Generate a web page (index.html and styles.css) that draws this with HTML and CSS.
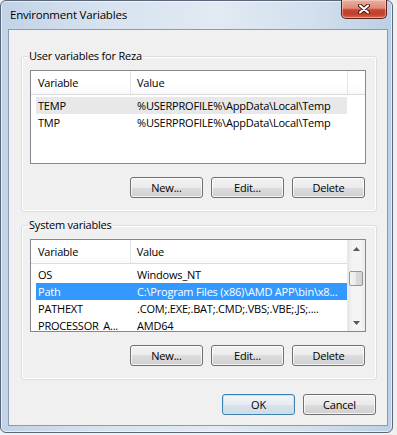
FILE: index.html
```html
<!DOCTYPE html>
<html lang="en">
<head>
    <meta charset="UTF-8">
    <meta name="viewport" content="width=device-width, initial-scale=1.0">
    <title>Environment Variables</title>
    <link rel="stylesheet" href="styles.css">
</head>
<body>

    <div class="window">
        <div class="titlebar">
            <span class="title">Environment Variables</span>
            <button class="close" title="Close">
                <svg width="12" height="10" viewBox="0 0 12 10">
                    <path d="M2 1.5 L10 8.5 M10 1.5 L2 8.5" stroke="#4a1a12" stroke-width="4" stroke-linecap="round"/>
                    <path d="M2 1.5 L10 8.5 M10 1.5 L2 8.5" stroke="#fff" stroke-width="2" stroke-linecap="round"/>
                </svg>
            </button>
        </div>

        <div class="client">
            <!-- User variables -->
            <div class="group">
                <span class="legend">User variables for Reza</span>
                <div class="list list-user">
                    <div class="list-main">
                        <div class="list-head">
                            <span class="head-name">Variable</span>
                            <span class="head-value">Value</span>
                        </div>
                        <div class="rows">
                            <div class="row muted"><span class="cell-name">TEMP</span><span class="cell-value">%USERPROFILE%\AppData\Local\Temp</span></div>
                            <div class="row"><span class="cell-name">TMP</span><span class="cell-value">%USERPROFILE%\AppData\Local\Temp</span></div>
                        </div>
                    </div>
                </div>
                <div class="actions">
                    <button class="btn">New...</button>
                    <button class="btn">Edit...</button>
                    <button class="btn">Delete</button>
                </div>
            </div>

            <!-- System variables -->
            <div class="group">
                <span class="legend">System variables</span>
                <div class="list list-sys">
                    <div class="list-main">
                        <div class="list-head">
                            <span class="head-name">Variable</span>
                            <span class="head-value">Value</span>
                        </div>
                        <div class="rows">
                            <div class="row"><span class="cell-name">OS</span><span class="cell-value">Windows_NT</span></div>
                            <div class="row selected"><span class="cell-name">Path</span><span class="cell-value">C:\Program Files (x86)\AMD APP\bin\x8...</span></div>
                            <div class="row"><span class="cell-name">PATHEXT</span><span class="cell-value">.COM;.EXE;.BAT;.CMD;.VBS;.VBE;.JS;....</span></div>
                            <div class="row"><span class="cell-name">PROCESSOR_A...</span><span class="cell-value">AMD64</span></div>
                        </div>
                    </div>
                    <div class="scroll">
                        <div class="scroll-btn"><svg width="7" height="4" viewBox="0 0 7 4"><path d="M0 4 L3.5 0 L7 4 Z" fill="#5a5a5a"/></svg></div>
                        <div class="thumb"></div>
                        <div class="track"></div>
                        <div class="scroll-btn"><svg width="7" height="4" viewBox="0 0 7 4"><path d="M0 0 L7 0 L3.5 4 Z" fill="#5a5a5a"/></svg></div>
                    </div>
                </div>
                <div class="actions">
                    <button class="btn">New...</button>
                    <button class="btn">Edit...</button>
                    <button class="btn">Delete</button>
                </div>
            </div>

            <div class="footer">
                <button class="btn default">OK</button>
                <button class="btn">Cancel</button>
            </div>
        </div>
    </div>

</body>
</html>
```

FILE: styles.css
```css
* { box-sizing: border-box; }
body { margin: 0; background: #f0f0f0; font-family: "Open Sans", "Segoe UI", sans-serif; font-size: 11px; letter-spacing: -0.2px; color: #000; }

/* window frame */
.window { width: 393px; height: 433px; border: 1px solid #59677a; border-radius: 6px; display: flex; flex-direction: column;
    background: linear-gradient(to right, #c2d3e6, #d6e2ef 25%, #e2eaf3 55%, #d2dfed 80%, #bccfe4);
    box-shadow: inset 0 0 0 1px rgba(255,255,255,.6); }
.titlebar { height: 28px; display: flex; align-items: flex-start; }
.title { flex: 1; padding-left: 9px; line-height: 27px; font-size: 11.5px; }
.close { width: 46px; height: 19px; margin: -1px 5px 0 0; padding: 0; display: flex; align-items: center; justify-content: center;
    border: 1px solid #5a2219; border-top: none; border-radius: 0 0 5px 5px;
    background: linear-gradient(#eab0a3, #de8b78 45%, #c9452f 55%, #c2412c 80%, #d66c53);
    box-shadow: inset 0 0 0 1px rgba(255,220,210,.5); }

.client { margin-left: 7px; width: 380px; height: 397px; border: 1px solid #8c9cb0; background: #f0f0f0; display: flex; flex-direction: column; }

/* group boxes */
.group { position: relative; margin: 26px 10px 0 12px; padding: 13px 10px 13px 8px; border: 1px solid #d5dfe5; border-radius: 3px; box-shadow: inset 0 0 0 1px #fff; }
.group + .group { margin-top: 13px; }
.legend { position: absolute; top: -9px; left: 6px; padding: 0 1px; line-height: 16px; background: #f0f0f0; }

/* list views */
.list { display: flex; border: 1px solid #828790; background: #fff; overflow: hidden; }
.list-user { height: 94px; }
.list-sys { height: 93px; }
.list-main { flex: 1; min-width: 0; }
.list-head { display: flex; height: 24px; line-height: 23px; border-bottom: 1px solid #dcdcdc; background: linear-gradient(#fff, #fff 60%, #f8f9fa); }
.head-name { width: 100px; padding-left: 7px; border-right: 1px solid #e5e5e5; }
.head-value { width: 217px; padding-left: 6px; border-right: 1px solid #e5e5e5; }
.list-sys .head-value { border-right: none; }
.rows { padding-top: 2px; }
.row { display: flex; margin-left: 5px; width: 311px; height: 17px; line-height: 17px; white-space: nowrap; }
.row.muted { background: #e8e8e8; }
.row.selected { background: #3399ff; color: #fff; }
.cell-name { width: 95px; padding-left: 2px; overflow: hidden; }
.cell-value { width: 216px; padding-left: 6px; overflow: hidden; }

/* scrollbar */
.scroll { width: 18px; display: flex; flex-direction: column; border-left: 1px solid #e8e8e8;
    background: linear-gradient(to right, #e6e6e6, #f4f4f4 25%, #f4f4f4 75%, #ebebeb); }
.scroll-btn { height: 17px; display: flex; align-items: center; justify-content: center; }
.thumb { height: 15px; margin: 14px 2px 0 1px; border: 1px solid #959595; border-radius: 2px;
    background: linear-gradient(to right, #f5f5f5, #e9e9e9 50%, #dadada 51%, #d4d4d4); }
.track { flex: 1; }

/* buttons */
.btn { width: 73px; height: 21px; padding: 0; font: inherit; letter-spacing: inherit; color: #000; border: 1px solid #707070; border-radius: 3px;
    background: linear-gradient(#f2f2f2, #ebebeb 50%, #dddddd 50%, #cfcfcf);
    box-shadow: inset 0 0 0 1px rgba(255,255,255,.75); }
.btn.default { border-color: #3c7fb1; background: linear-gradient(#f2f5f8, #e6ecf1 50%, #d9e3ea 50%, #cfdbe5);
    box-shadow: inset 0 0 0 1px #c5e4f6; }
.actions { display: flex; justify-content: flex-end; gap: 8px; margin: 13px 1px 0 0; }
.footer { display: flex; justify-content: flex-end; gap: 8px; margin: 14px 11px 0 0; }
```
